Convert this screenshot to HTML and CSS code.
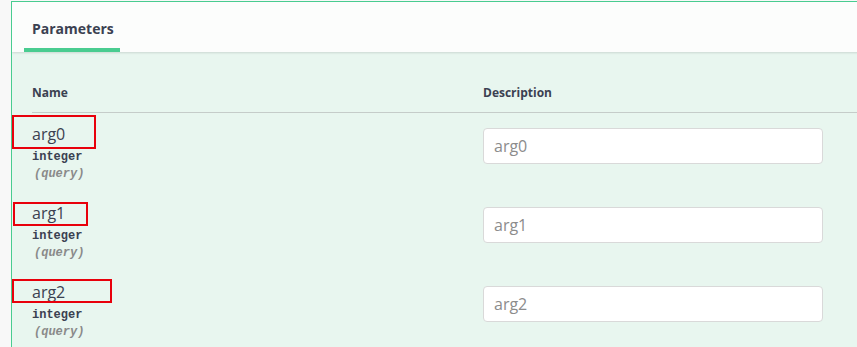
FILE: index.html
```html
<!DOCTYPE html>
<html>
<head>
<meta charset="utf-8">
<link rel="stylesheet" href="styles.css">
</head>
<body>
<div class="opblock">
  <div class="section-header">
    <div class="tab">Parameters</div>
  </div>
  <div class="table-container">
    <div class="row head">
      <div class="th">Name</div>
      <div class="th">Description</div>
    </div>
    <div class="row">
      <div class="mark mark0"></div>
      <div class="name-cell">
        <div class="pname">arg0</div>
        <div class="ptype">integer</div>
        <div class="pin">(query)</div>
      </div>
      <div class="desc-cell"><input class="field" type="text" placeholder="arg0"></div>
    </div>
    <div class="row">
      <div class="mark mark1"></div>
      <div class="name-cell">
        <div class="pname">arg1</div>
        <div class="ptype">integer</div>
        <div class="pin">(query)</div>
      </div>
      <div class="desc-cell"><input class="field" type="text" placeholder="arg1"></div>
    </div>
    <div class="row">
      <div class="mark mark2"></div>
      <div class="name-cell">
        <div class="pname">arg2</div>
        <div class="ptype">integer</div>
        <div class="pin">(query)</div>
      </div>
      <div class="desc-cell"><input class="field" type="text" placeholder="arg2"></div>
    </div>
  </div>
</div>
</body>
</html>
```

FILE: styles.css
```css
html, body {
  margin: 0;
  padding: 0;
  background: #f8f8f8;
  height: 100%;
  overflow: hidden;
}

body {
  font-family: "Open Sans", "Noto Sans", sans-serif;
  color: #3b4151;
  padding-top: 1px;
  padding-left: 11px;
  box-sizing: border-box;
}

.opblock {
  border-top: 1px solid #49cc90;
  border-left: 1px solid #49cc90;
  background: #e8f6ef;
  margin-right: -20px;
  height: 345px;
  overflow: hidden;
}

.section-header {
  height: 50px;
  background: #fcfdfc;
  box-shadow: 0 1px 2px rgba(0, 0, 0, 0.12);
  padding-left: 12px;
  display: flex;
  align-items: flex-end;
  position: relative;
}

.tab {
  font-size: 14px;
  font-weight: 700;
  padding: 6px 8px 0;
  height: 50px;
  line-height: 42px;
  box-sizing: border-box;
  border-bottom: 4px solid #49cc90;
  width: 96px;
}

.table-container {
  padding: 20px 0 0 20px;
}

.row {
  display: grid;
  grid-template-columns: 451px 1fr;
  position: relative;
}

.row.head {
  border-bottom: 1px solid #c5ccc9;
}

.th {
  font-size: 12px;
  font-weight: 700;
  padding: 13px 0 11px;
  line-height: 16px;
}

.name-cell {
  padding: 10px 0;
}

.pname {
  font-size: 16px;
  line-height: 22px;
  height: 22px;
}

.ptype {
  font-family: "Liberation Mono", "DejaVu Sans Mono", monospace;
  font-size: 12px;
  font-weight: 700;
  line-height: 16px;
  padding-top: 4px;
}

.pin {
  font-family: "Liberation Mono", "DejaVu Sans Mono", monospace;
  font-size: 12px;
  font-weight: 700;
  font-style: italic;
  color: #8a8a8a;
  line-height: 15px;
  padding-top: 2px;
  padding-left: 2px;
}

.desc-cell {
  padding: 15px 0;
}

.field {
  display: block;
  box-sizing: border-box;
  width: 340px;
  height: 36px;
  border: 1px solid #d9d9d9;
  border-radius: 4px;
  background: #fff;
  padding: 0 10px;
  margin: 0;
  font-family: "Open Sans", "Noto Sans", sans-serif;
  font-size: 16px;
  color: #3b4151;
  outline: none;
}

.field::placeholder {
  color: #8c8c8c;
}

.mark {
  position: absolute;
  border: 2px solid #e8000b;
  box-sizing: border-box;
  pointer-events: none;
}

.mark0 {
  left: -20px;
  top: 2px;
  width: 84px;
  height: 34px;
}

.mark1 {
  left: -19px;
  top: 10px;
  width: 75px;
  height: 24px;
}

.mark2 {
  left: -20px;
  top: 8px;
  width: 100px;
  height: 24px;
}
```
